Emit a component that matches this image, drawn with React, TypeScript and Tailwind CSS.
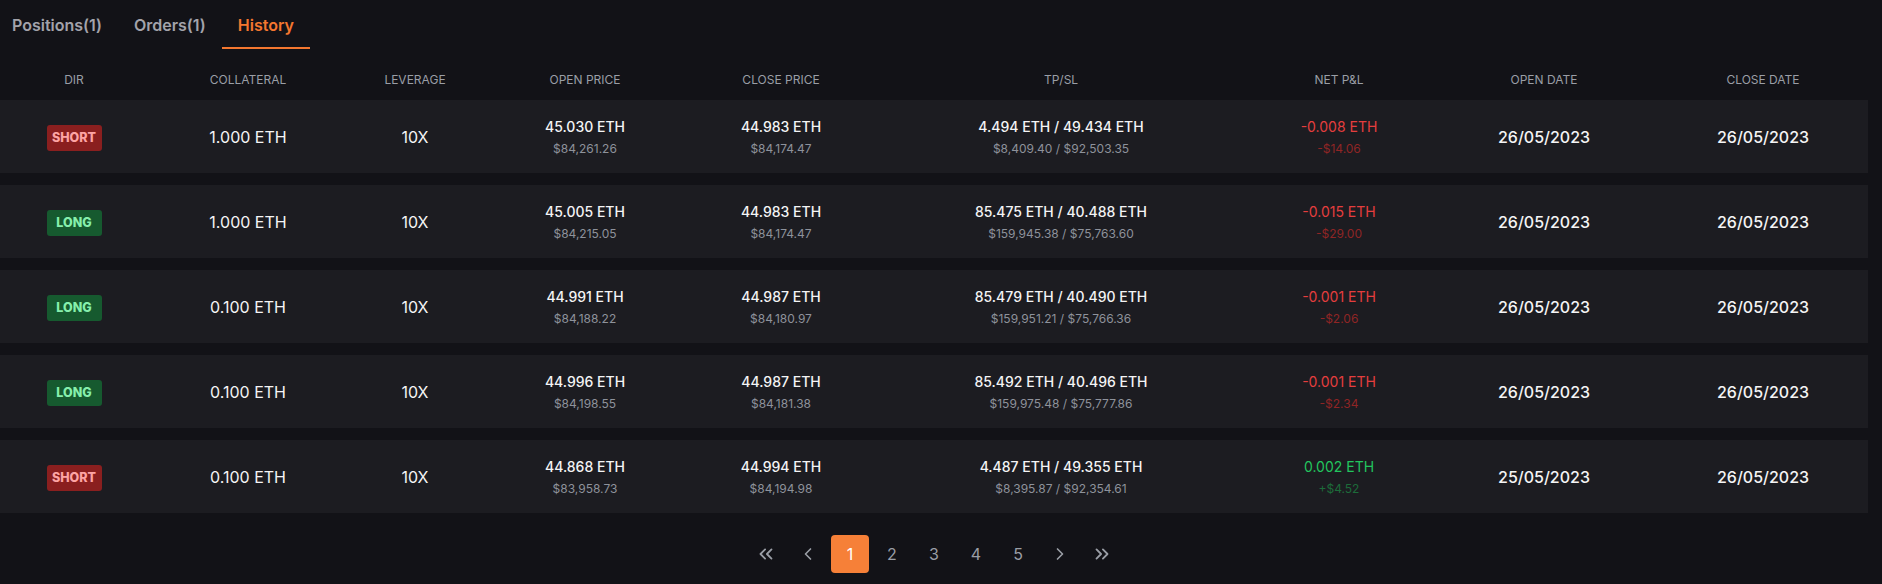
import { ChevronLeft, ChevronRight, ChevronsLeft, ChevronsRight } from "lucide-react";

type Trade = {
  dir: "SHORT" | "LONG";
  collateral: string;
  open: string;
  openUsd: string;
  close: string;
  closeUsd: string;
  tpsl: string;
  tpslUsd: string;
  pnl: string;
  pnlUsd: string;
  openDate: string;
  closeDate: string;
};

const trades: Trade[] = [
  { dir: "SHORT", collateral: "1.000 ETH", open: "45.030 ETH", openUsd: "$84,261.26", close: "44.983 ETH", closeUsd: "$84,174.47", tpsl: "4.494 ETH / 49.434 ETH", tpslUsd: "$8,409.40 / $92,503.35", pnl: "-0.008 ETH", pnlUsd: "-$14.06", openDate: "26/05/2023", closeDate: "26/05/2023" },
  { dir: "LONG", collateral: "1.000 ETH", open: "45.005 ETH", openUsd: "$84,215.05", close: "44.983 ETH", closeUsd: "$84,174.47", tpsl: "85.475 ETH / 40.488 ETH", tpslUsd: "$159,945.38 / $75,763.60", pnl: "-0.015 ETH", pnlUsd: "-$29.00", openDate: "26/05/2023", closeDate: "26/05/2023" },
  { dir: "LONG", collateral: "0.100 ETH", open: "44.991 ETH", openUsd: "$84,188.22", close: "44.987 ETH", closeUsd: "$84,180.97", tpsl: "85.479 ETH / 40.490 ETH", tpslUsd: "$159,951.21 / $75,766.36", pnl: "-0.001 ETH", pnlUsd: "-$2.06", openDate: "26/05/2023", closeDate: "26/05/2023" },
  { dir: "LONG", collateral: "0.100 ETH", open: "44.996 ETH", openUsd: "$84,198.55", close: "44.987 ETH", closeUsd: "$84,181.38", tpsl: "85.492 ETH / 40.496 ETH", tpslUsd: "$159,975.48 / $75,777.86", pnl: "-0.001 ETH", pnlUsd: "-$2.34", openDate: "26/05/2023", closeDate: "26/05/2023" },
  { dir: "SHORT", collateral: "0.100 ETH", open: "44.868 ETH", openUsd: "$83,958.73", close: "44.994 ETH", closeUsd: "$84,194.98", tpsl: "4.487 ETH / 49.355 ETH", tpslUsd: "$8,395.87 / $92,354.61", pnl: "0.002 ETH", pnlUsd: "+$4.52", openDate: "25/05/2023", closeDate: "26/05/2023" },
];

const headers = ["DIR", "COLLATERAL", "LEVERAGE", "OPEN PRICE", "CLOSE PRICE", "TP/SL", "NET P&L", "OPEN DATE", "CLOSE DATE"];

const cols = "grid grid-cols-[148px_200px_134px_206px_186px_374px_182px_228px_210px]";

const Cell = ({ children }: { children: React.ReactNode }) => (
  <div className="flex flex-col items-center justify-center whitespace-nowrap">{children}</div>
);

const TwoLine = ({ top, bottom, topClass = "text-[#f4f4f5]", bottomClass = "text-[#8e929b]" }: { top: string; bottom: string; topClass?: string; bottomClass?: string }) => (
  <Cell>
    <span className={`pt-[2px] text-[14px] font-medium leading-[20px] ${topClass}`}>{top}</span>
    <span className={`mt-[2px] text-[12px] leading-[20px] ${bottomClass}`}>{bottom}</span>
  </Cell>
);

export default function App() {
  const tabs = ["Positions(1)", "Orders(1)", "History"];
  return (
    <div className="min-h-screen w-[1882px] bg-[#121217] font-['Inter',sans-serif]">
      <div className="w-[1868px]">
        <div className="-ml-1 flex h-[49px]">
          {tabs.map((t) => (
            <button
              key={t}
              className={`flex h-[49px] items-center px-[16px] text-[16px] font-semibold ${
                t === "History" ? "border-b-2 border-[#f4772f] pt-[2px] text-[#f4772f]" : "text-[#a3a3ab]"
              }`}
            >
              {t}
            </button>
          ))}
        </div>

        <div className={`${cols} h-[51px] pt-[23px] text-[12px] leading-[16px] text-[#9a9ea6]`}>
          {headers.map((h) => (
            <div key={h} className="text-center">{h}</div>
          ))}
        </div>

        <div className="flex flex-col gap-[12px]">
          {trades.map((r, i) => (
            <div key={i} className={`${cols} h-[73px] bg-[#1c1c21]`}>
              <Cell>
                <span
                  className={`mt-[3px] flex h-[26px] w-[55px] items-center justify-center rounded-[3px] text-[12.5px] font-extrabold ${
                    r.dir === "SHORT" ? "bg-[#8a1f1f] text-[#fda4a4]" : "bg-[#165a2f] text-[#86efac]"
                  }`}
                >
                  {r.dir}
                </span>
              </Cell>
              <Cell>
                <span className="text-[16px] text-[#f4f4f5]">{r.collateral}</span>
              </Cell>
              <Cell>
                <span className="text-[16px] text-[#f4f4f5]">10X</span>
              </Cell>
              <TwoLine top={r.open} bottom={r.openUsd} />
              <TwoLine top={r.close} bottom={r.closeUsd} />
              <TwoLine top={r.tpsl} bottom={r.tpslUsd} />
              {r.pnl.startsWith("-") ? (
                <TwoLine top={r.pnl} bottom={r.pnlUsd} topClass="text-[#e53e3e] font-normal" bottomClass="text-[#8f2525]" />
              ) : (
                <TwoLine top={r.pnl} bottom={r.pnlUsd} topClass="text-[#22c55e] font-normal" bottomClass="text-[#1d6b3a]" />
              )}
              <Cell>
                <span className="text-[16px] font-medium text-[#f4f4f5]">{r.openDate}</span>
              </Cell>
              <Cell>
                <span className="text-[16px] font-medium text-[#f4f4f5]">{r.closeDate}</span>
              </Cell>
            </div>
          ))}
        </div>

        <div className="flex justify-center gap-[4px] pt-[22px] text-[16px] text-[#9a9ea6]">
          <button className="flex h-[38px] w-[38px] items-center justify-center"><ChevronsLeft size={22} strokeWidth={2} /></button>
          <button className="flex h-[38px] w-[38px] items-center justify-center"><ChevronLeft size={20} strokeWidth={2} /></button>
          {[1, 2, 3, 4, 5].map((n) => (
            <button
              key={n}
              className={`flex h-[38px] w-[38px] items-center justify-center rounded-[4px] ${
                n === 1 ? "bg-[#f68038] text-white" : ""
              }`}
            >
              {n}
            </button>
          ))}
          <button className="flex h-[38px] w-[38px] items-center justify-center"><ChevronRight size={20} strokeWidth={2} /></button>
          <button className="flex h-[38px] w-[38px] items-center justify-center"><ChevronsRight size={22} strokeWidth={2} /></button>
        </div>
      </div>
    </div>
  );
}
